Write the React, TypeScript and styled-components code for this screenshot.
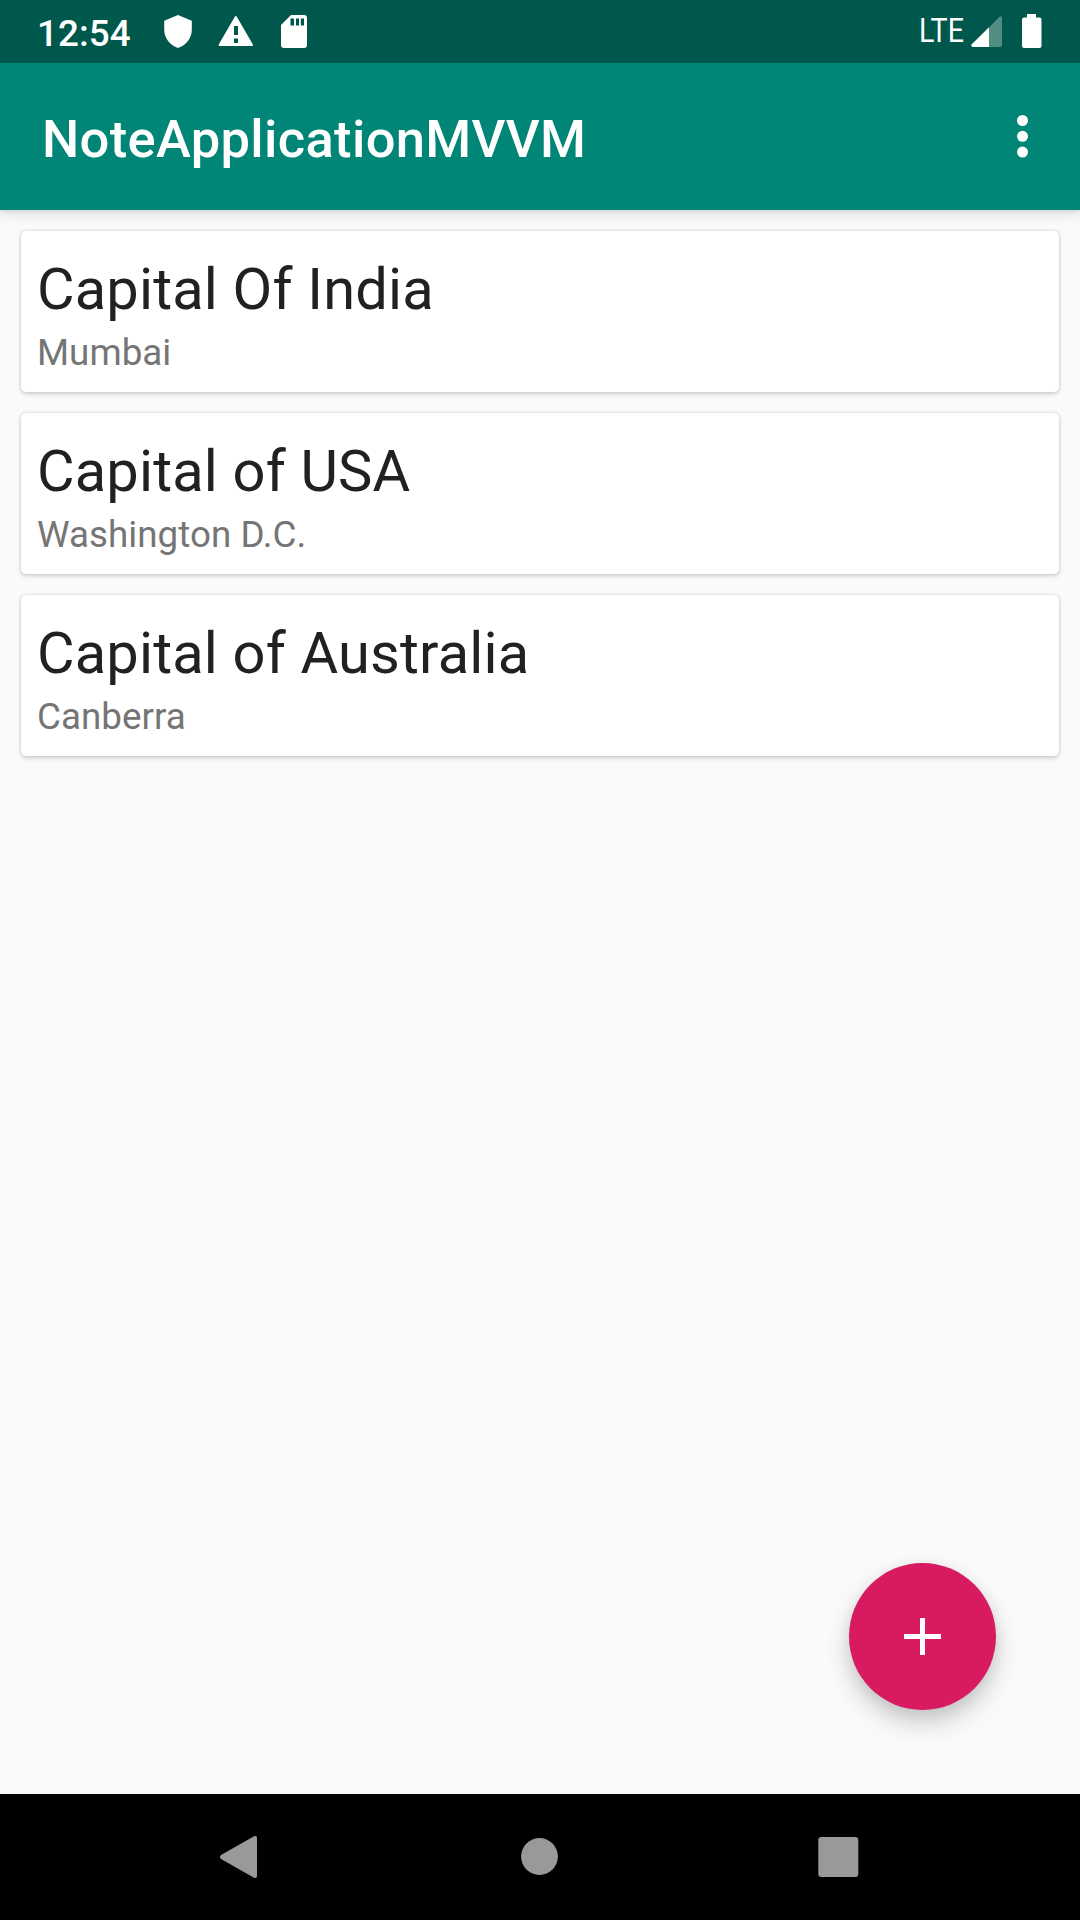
import React from "react";
import styled, { createGlobalStyle } from "styled-components";

const GlobalStyle = createGlobalStyle`
  *, *::before, *::after { box-sizing: border-box; }
  html, body { margin: 0; padding: 0; background: #fafafa; }
  body { font-family: Roboto, "Noto Sans", sans-serif; }
`;

const Screen = styled.div`
  width: 1080px;
  height: 1920px;
  display: flex;
  flex-direction: column;
  background: #fafafa;
  overflow: hidden;
`;

const StatusBar = styled.header`
  position: relative;
  z-index: 1;
  height: 63px;
  flex: none;
  display: flex;
  align-items: center;
  justify-content: space-between;
  padding: 0 38px 0 37px;
  background: #00574b;
  color: #fff;
`;

const StatusGroup = styled.div`
  display: flex;
  align-items: center;
  height: 63px;
`;

const Clock = styled.time`
  width: 121px;
  padding-top: 4px;
  font-size: 36.75px;
  line-height: 43px;
  font-weight: 500;
  letter-spacing: 0.1px;
`;

const Network = styled.span`
  width: 52px;
  padding-bottom: 1px;
  font-size: 32.5px;
  line-height: 38px;
  transform: scaleX(0.88);
  transform-origin: 0 50%;
`;

const Glyph = styled.svg<{ $gap?: number }>`
  display: block;
  flex: none;
  margin-right: ${({ $gap = 0 }) => $gap}px;
`;

const Toolbar = styled.div`
  height: 147px;
  flex: none;
  display: flex;
  align-items: center;
  justify-content: space-between;
  padding: 0 42px;
  background: #008577;
  box-shadow: 0 3px 14px rgba(0, 0, 0, 0.12), 0 1px 4px rgba(0, 0, 0, 0.1);
`;

const AppTitle = styled.h1`
  margin: 5px 0 0;
  color: #fff;
  font-size: 52.5px;
  line-height: 62px;
  font-weight: 500;
  letter-spacing: 0.33px;
`;

const MenuButton = styled.button`
  display: flex;
  justify-content: center;
  width: 32px;
  padding: 0 0 1px;
  border: 0;
  background: none;
`;

const Content = styled.main`
  flex: 1;
  display: flex;
  flex-direction: column;
  justify-content: space-between;
`;

const NoteList = styled.ul`
  list-style: none;
  margin: 0;
  padding: 21px;
  display: flex;
  flex-direction: column;
  gap: 21px;
`;

const Note = styled.li`
  height: 161px;
  padding: 20px 16px 14px;
  border-radius: 5px;
  background: #fff;
  box-shadow: 0 2px 5px rgba(0, 0, 0, 0.16), 0 0 3px rgba(0, 0, 0, 0.14);
`;

const NoteTitle = styled.h2`
  margin: 0;
  color: #212121;
  font-size: 57.75px;
  line-height: 76px;
  font-weight: 400;
  letter-spacing: 0.18px;
`;

const NoteText = styled.p`
  margin: 0;
  color: #757575;
  font-size: 36.75px;
  line-height: 51px;
  letter-spacing: 0.03px;
`;

const AddButton = styled.button`
  align-self: flex-end;
  width: 147px;
  height: 147px;
  margin: 0 84px 84px 0;
  padding: 0;
  display: flex;
  align-items: center;
  justify-content: center;
  border: 0;
  border-radius: 50%;
  background: #d81b60;
  box-shadow: 0 13px 24px rgba(0, 0, 0, 0.19), 0 3px 14px rgba(0, 0, 0, 0.07);
`;

const NavBar = styled.nav`
  height: 126px;
  flex: none;
  display: flex;
  align-items: center;
  justify-content: space-between;
  padding: 0 221px 0 219px;
  background: #000;
`;

const notes = [
  { title: "Capital Of India", text: "Mumbai" },
  { title: "Capital of USA", text: "Washington D.C." },
  { title: "Capital of Australia", text: "Canberra" },
];

export default function App() {
  return (
    <Screen>
      <GlobalStyle />
      <StatusBar>
        <StatusGroup>
          <Clock>12:54</Clock>
          <Glyph $gap={15} width="42" height="63" viewBox="158 0 42 63" fill="#fff">
            <path d="M178 15 191.800 20.800V30C191.800 38 186 45.500 178 48 170 45.500 164.200 38 164.200 30V20.800Z" />
          </Glyph>
          <Glyph $gap={15} width="42" height="63" viewBox="215 0 42 63">
            <path d="M235.800 17 252 45H219.600Z" fill="#fff" stroke="#fff" strokeWidth="2" strokeLinejoin="round" />
            <path d="M234 26H238V35H234ZM234 38.500H238V43H234Z" fill="#00574b" />
          </Glyph>
          <Glyph width="42" height="63" viewBox="272 0 42 63">
            <path d="M291 15H304Q307 15 307 18V45Q307 48 304 48H284Q281 48 281 45V25Z" fill="#fff" />
            <path d="M290.500 18.500H294V25.500H290.500ZM296 18.500H299V25.500H296ZM300.800 18.500H304V25.500H300.800Z" fill="#00574b" />
          </Glyph>
        </StatusGroup>
        <StatusGroup>
          <Network>LTE</Network>
          <Glyph $gap={19} width="32" height="63" viewBox="971 0 32 63" fill="#fff">
            <path d="M989 27.500 999.500 16.800Q1002 15 1002 18V45Q1002 47 1000 47H989Z" opacity=".32" />
            <path d="M989 27.200V47H972.500Q970 46 972 44Z" />
          </Glyph>
          <Glyph width="20" height="63" viewBox="1022 0 20 63" fill="#fff">
            <path d="M1027 14H1036V17.500H1039.500Q1041.500 17.500 1041.500 19.500V46Q1041.500 48 1039.500 48H1024Q1022 48 1022 46V19.500Q1022 17.500 1024 17.500H1027Z" />
          </Glyph>
        </StatusGroup>
      </StatusBar>
      <Toolbar>
        <AppTitle>NoteApplicationMVVM</AppTitle>
        <MenuButton aria-label="More options">
          <Glyph width="12" height="44" viewBox="0 0 12 44" fill="#fff">
            <circle cx="6.500" cy="6.500" r="5.500" />
            <circle cx="6.500" cy="22.300" r="5.500" />
            <circle cx="6.500" cy="38.100" r="5.500" />
          </Glyph>
        </MenuButton>
      </Toolbar>
      <Content>
        <NoteList>
          {notes.map((note) => (
            <Note key={note.title}>
              <NoteTitle>{note.title}</NoteTitle>
              <NoteText>{note.text}</NoteText>
            </Note>
          ))}
        </NoteList>
        <AddButton aria-label="Add note">
          <Glyph width="37" height="37" viewBox="0 0 37 37" fill="#fff">
            <path d="M16 0H21V16H37V21H21V37H16V21H0V16H16Z" />
          </Glyph>
        </AddButton>
      </Content>
      <NavBar>
        <Glyph width="39" height="44" viewBox="219 1835 39 44" fill="#999">
          <path d="M221 1855 254 1836.300Q257 1835 257 1838V1876Q257 1879 254 1877.700L221 1859Q219 1857 221 1855Z" />
        </Glyph>
        <Glyph width="40" height="38" viewBox="0 0 40 38" fill="#999">
          <circle cx="21.500" cy="18.500" r="18.400" />
        </Glyph>
        <Glyph width="41" height="40" viewBox="0 0 41 40" fill="#999">
          <rect x=".3" width="40" height="40" rx="3" />
        </Glyph>
      </NavBar>
    </Screen>
  );
}
